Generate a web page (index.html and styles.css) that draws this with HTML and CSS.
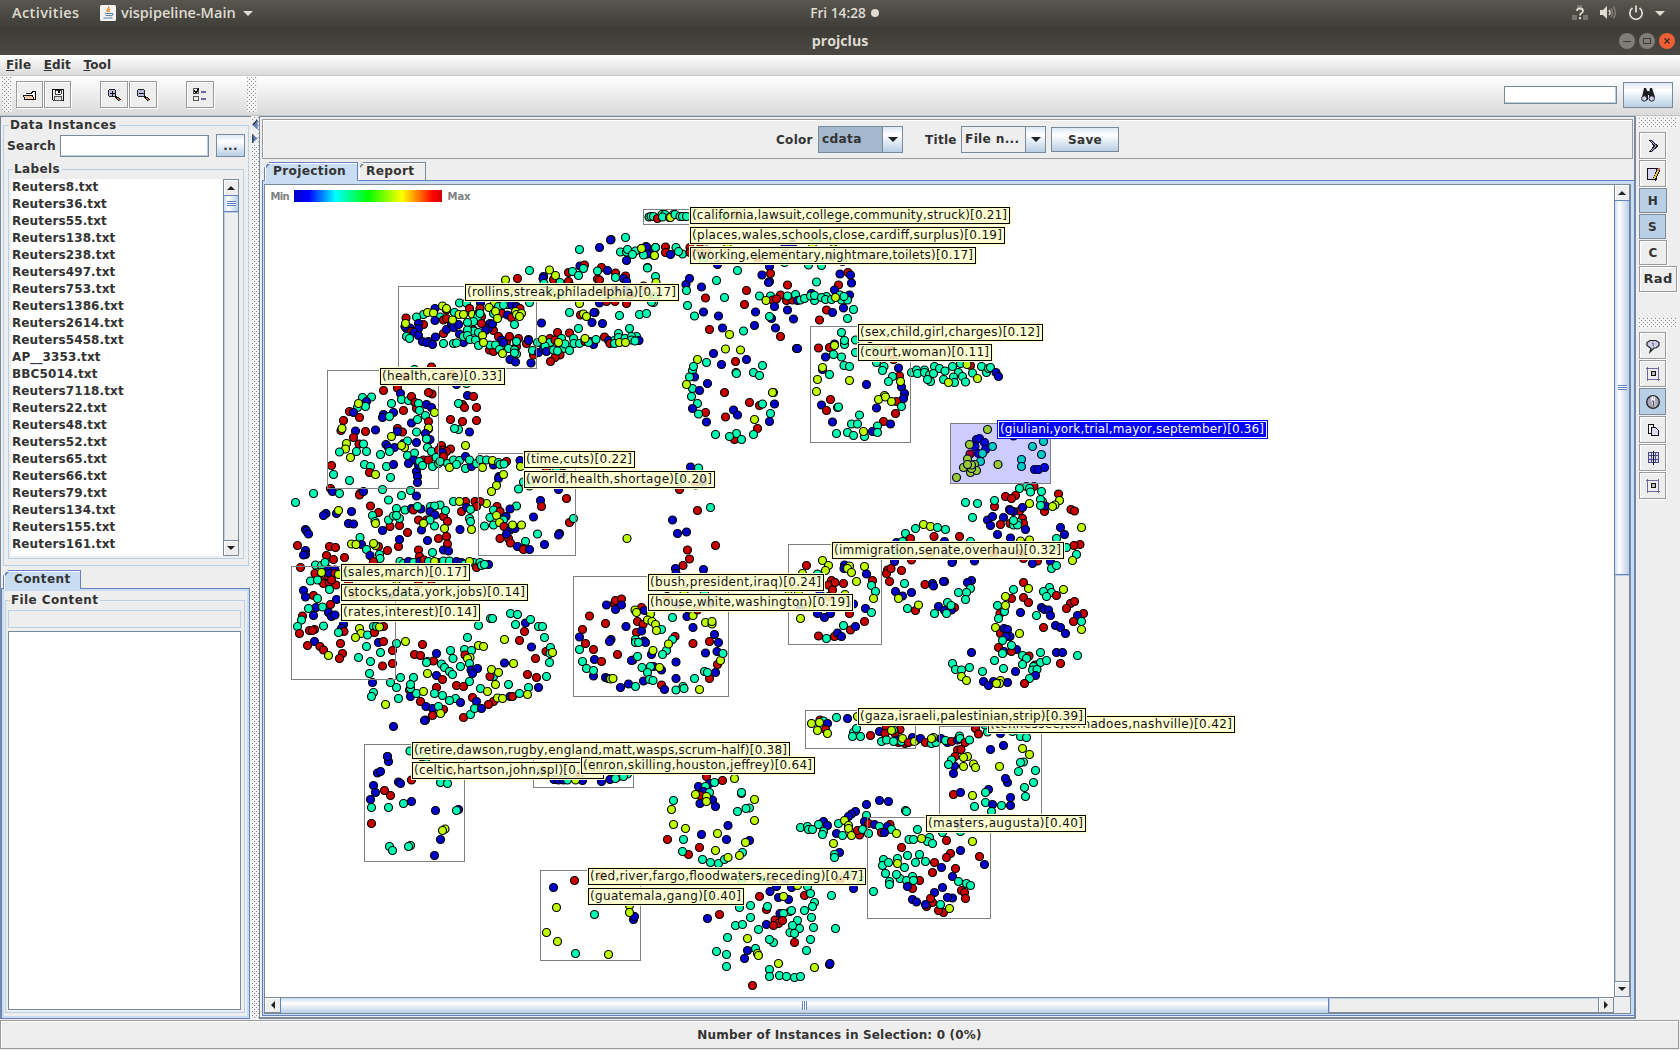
FILE: index.html
```html
<!DOCTYPE html>
<html lang="en">
<head>
<meta charset="utf-8">
<title>projclus</title>
<link rel="stylesheet" href="styles.css">
</head>
<body>
<header class="shell">
  <div class="shell-left"><span class="activities">Activities</span>
    <svg class="java" viewBox="0 0 16 16"><rect width="16" height="16" rx="1.5" fill="#f2f2f2"/><path d="M8.5 1.5c1.5 2-3 3-1 5.500M10 4c-1.500 1-1.500 2 -.5 3" stroke="#e8861e" fill="none" stroke-width="1.300"/><path d="M5 8.500h6M5.500 10.500h5M3.500 13h9M11 8.500c3-.5 2 2-.5 2.500" stroke="#54809f" fill="none" stroke-width="1.100"/></svg>
    <span class="appname">vispipeline-Main</span><i class="caret"></i></div>
  <div class="clock">Fri 14:28 <b></b></div>
  <div class="shell-right">
    <svg class="net" viewBox="0 0 16 16"><path d="M5 0h5v3H5zM0 10h5v5H0zM11 10h5v5h-5z" fill="#77756f"/><path d="M5 6q0-2.500 3-2.500 3 0 3 2.500 0 1.200-1.500 2Q8 9 8 10.500" stroke="#dfdbd2" stroke-width="1.800" fill="none"/><rect x="7" y="12" width="2" height="2.200" fill="#dfdbd2"/></svg>
    <svg class="vol" viewBox="0 0 16 16"><path d="M0 5h3l4-4v13l-4-4H0z" fill="#dfdbd2"/><path d="M9 5q2 2.500 0 5" stroke="#dfdbd2" stroke-width="1.500" fill="none"/><path d="M11 3q3 4.500 0 9M13.500 1.500q3.500 6 0 12" stroke="#8a8780" stroke-width="1.300" fill="none"/></svg>
    <svg class="pow" viewBox="0 0 16 16"><path d="M4.500 3a6.200 6.200 0 1 0 7 0M8 .5v7" stroke="#dfdbd2" stroke-width="1.800" fill="none"/></svg>
    <i class="caret"></i>
  </div>
</header>
<div class="titlebar"><span>projclus</span>
  <div class="winbtns"><svg viewBox="0 0 16 16"><circle cx="8" cy="8" r="8" fill="#7f7d76"/><path d="M4 8.500h8" stroke="#3c3b37"/></svg><svg viewBox="0 0 16 16"><circle cx="8" cy="8" r="8" fill="#7f7d76"/><rect x="4.500" y="5.500" width="7" height="5" fill="none" stroke="#3c3b37"/></svg><svg viewBox="0 0 16 16"><circle cx="8" cy="8" r="8" fill="#ee5f35"/><path d="M5.500 5.500l5 5m0-5l-5 5" stroke="#3c2a20" stroke-width="1.300"/></svg></div>
</div>
<nav class="menubar"><span><u>F</u>ile</span><span><u>E</u>dit</span><span><u>T</u>ool</span></nav>
<div class="toolbar">
  <i class="grip"></i>
  <button class="tb open"><svg class="px" viewBox="0 0 16 16"><path d="M2 6h7l3-2v8H4z" fill="#fff"/><path d="M3 9h9v3H4z" fill="#f3c9a4"/><path d="M1.500 8.500h9l1.500 4H3zM4 6.500h5l2-2h2v8" fill="none" stroke="#111"/></svg></button>
  <button class="tb save"><svg class="px" viewBox="0 0 16 16"><path d="M2.500 2.500h11v11h-10l-1-1z" fill="#eee" stroke="#111"/><path d="M5 3h6v4H5z" fill="#fff" stroke="#111" stroke-width=".8"/><rect x="8" y="3" width="2" height="3" fill="#111"/><rect x="4.500" y="9.500" width="7" height="4" fill="#ddd" stroke="#555"/></svg></button>
  <button class="tb zin"><svg class="px" viewBox="0 0 16 16"><circle cx="6" cy="6" r="4" fill="#b9b9dc" stroke="#222"/><path d="M3.500 6h5M6 3.500v5" stroke="#111"/><path d="M9 9l5 4.500" stroke="#111" stroke-width="2.600"/><path d="M11 11l3 2.500" stroke="#a5592a" stroke-width="1.200"/></svg></button>
  <button class="tb zout"><svg class="px" viewBox="0 0 16 16"><circle cx="6" cy="6" r="4" fill="#b9b9dc" stroke="#222"/><path d="M3.500 6h5" stroke="#111"/><path d="M9 9l5 4.500" stroke="#111" stroke-width="2.600"/><path d="M11 11l3 2.500" stroke="#a5592a" stroke-width="1.200"/></svg></button>
  <button class="tb list"><svg class="px" viewBox="0 0 16 16"><path d="M1.500 1.500h5v5h-5zM1.500 9.500h5v4h-5z" fill="#eee" stroke="#555"/><path d="M2.500 3.500l1.500 2 3-4" stroke="#000" fill="none" stroke-width="1.500"/><path d="M9 4.500h5M9 11.500h5" stroke="#6a6aa8" stroke-width="2"/></svg></button>
  <i class="grip second"></i>
  <div class="find"><div class="field"></div><button class="metal"><svg viewBox="0 0 16 16"><path d="M4 1h2l2 5V13H6L2 10zM10 1h2l3 9-4 3H9V6z" fill="#1c1c1c"/><path d="M7 4h2v4H7z" fill="#1c1c1c"/><circle cx="4.300" cy="11.500" r="2.700" fill="#ccccf2" stroke="#222"/><circle cx="11.700" cy="11.500" r="2.700" fill="#ccccf2" stroke="#222"/></svg></button></div>
</div>
<div class="workspace">
  <aside class="left">
    <fieldset class="instances"><legend>Data Instances</legend>
      <div class="search"><label>Search</label><div class="field"></div><button class="metal">...</button></div>
      <fieldset class="labels"><legend>Labels</legend>
        <div class="listrow"><ul id="files"></ul>
        <div class="vbar"><i class="ar up"></i><i class="thumb"><s></s></i><i class="track"></i><i class="ar down"></i></div></div>
      </fieldset>
    </fieldset>
    <div class="tab content-tab">Content</div>
    <div class="filepanel"><fieldset><legend>File Content</legend><div class="fname"></div><div class="ftext"></div></fieldset></div>
  </aside>
  <div class="divider"><svg viewBox="0 0 5 22"><path d="M5 0v9L0 4.500zM0 13v8l5-4z" fill="#6382bf"/><path d="M4.500 0L.5 4.500M.5 13v8" stroke="#222" fill="none"/></svg></div>
  <main class="main">
    <div class="options"><span>Color</span><div class="combo sel"><em>cdata</em><b></b></div><span class="ttl">Title</span><div class="combo"><em>File n...</em><b></b></div><button class="metal">Save</button></div>
    <div class="tabs"><div class="tab on">Projection</div><div class="tab off">Report</div></div>
    <div class="tabpanel"><div class="viewport">
      <svg id="plot" viewBox="265 185 1349 812">
        <defs><linearGradient id="scale"><stop offset="0" stop-color="#0000c8"/><stop offset=".1" stop-color="#00f"/><stop offset=".28" stop-color="#0ff"/><stop offset=".5" stop-color="#0f0"/><stop offset=".73" stop-color="#ff0"/><stop offset=".94" stop-color="#f00"/><stop offset="1" stop-color="#d00000"/></linearGradient></defs>
        <text class="key" x="270.500" y="200" textLength="19">Min</text><rect x="294" y="190" width="148" height="12" fill="url(#scale)"/><text class="key" x="447.500" y="200" textLength="23">Max</text>
      </svg>
      <div class="vbar big"><i class="ar up"></i><i class="thumb"><s></s></i><i class="track"></i><i class="ar down"></i></div>
      <div class="hbar"><i class="ar lf"></i><i class="thumb"><s></s></i><i class="track"></i><i class="ar rt"></i></div>
      <div class="corner"></div>
    </div></div>
  </main>
  <aside class="side">
    <i class="hgrip"></i>
    <button class="tb"><svg class="px" viewBox="0 0 16 16"><path d="M4 2h3l6 6-6 6H4l5-6z" fill="#a9a9e0"/><path d="M4.500 2.500h2l6 5.500-6 5.500h-2l5-5.500z" fill="#a9a9e0" stroke="#222"/></svg></button>
    <button class="tb"><svg class="px" viewBox="0 0 16 16"><path d="M2.500 2.500h9v11h-9z" fill="#d5d5f4" stroke="#111"/><path d="M14 3l-5 11" stroke="#111" stroke-width="3.500"/><path d="M13 5l-4 8" stroke="#e8c832" stroke-width="1.600"/><path d="M14 2l-1 3" stroke="#c77" stroke-width="2"/></svg></button>
    <button class="tb t on wide">H</button><button class="tb t on">S</button><button class="tb t wide">C</button><button class="tb t rad">Rad</button>
    <i class="hgrip next"></i>
    <button class="tb"><svg viewBox="0 0 16 16"><path d="M5 2.500h6l3 2v3l-3 2.500H9L5 14l1-3.500-4-3v-3z" fill="#cfcfe8" stroke="#222" stroke-width="1.200"/><path d="M8 3.500v1M7 5.500h1.300v3" stroke="#667" fill="none"/></svg></button>
    <button class="tb"><svg class="px" viewBox="0 0 16 16"><rect x="2.500" y="2.500" width="11" height="11" fill="none" stroke="#6a6aa0"/><path d="M1 2.500h1M14 13.500h1M2.500 1v14M13.500 1v14" stroke="#6a6aa0"/><rect x="6.500" y="5.500" width="4" height="4" fill="#bbb" stroke="#111"/></svg></button>
    <button class="tb on"><svg viewBox="0 0 16 16"><circle cx="8" cy="8" r="6.300" fill="#aaa6bd" stroke="#222" stroke-width="1.300"/><path d="M6 7h2.500v5M6 12h5M7.500 3.500h1.500v1.500H7.500z" stroke="#fff" stroke-width="2.200" fill="none"/><path d="M6.500 7h2v4.500M6 12h4.500M8 4h1" stroke="#444" fill="none"/></svg></button>
    <button class="tb"><svg class="px" viewBox="0 0 16 16"><path d="M3.500 2.500h5v9h-5z" fill="#fff" stroke="#111"/><path d="M6.500 5.500h4l3 3v5h-7z" fill="#dcdcf5" stroke="#111"/></svg></button>
    <button class="tb"><svg class="px" viewBox="0 0 16 16"><path d="M3.500 2.500h10v10h-10zM6.500 2v11M10.500 2v11M3 5.500h11M3 9.500h11" fill="#dcdcf5" stroke="#4a4a88"/><path d="M8.500 1v14" stroke="#111"/></svg></button>
    <button class="tb"><svg class="px" viewBox="0 0 16 16"><rect x="2.500" y="2.500" width="11" height="11" fill="none" stroke="#6a6aa0"/><path d="M1 2.500h1M14 13.500h1M2.500 1v14M13.500 1v14" stroke="#6a6aa0"/><rect x="6.500" y="5.500" width="4" height="4" fill="#bbb" stroke="#111"/></svg></button>
  </aside>
</div>
<footer class="status"><div>Number of Instances in Selection: 0 (0%)</div></footer>
<script src="plot.js"></script>
</body>
</html>
```
FILE: styles.css
```css
*{box-sizing:border-box}
body{margin:0;width:1680px;height:1050px;display:flex;flex-direction:column;overflow:hidden;background:#eee;color:#333;font:bold 12px/14px "DejaVu Sans",sans-serif;letter-spacing:.3px}
button,fieldset,legend,ul{margin:0;padding:0;font:inherit;color:inherit;letter-spacing:inherit}
i,em,s{font-style:normal;text-decoration:none}
.shell,.titlebar{display:grid;align-items:center;color:#dfdbd2;font:600 14.500px/18px "Open Sans","Noto Sans",sans-serif;letter-spacing:0;flex:none}
.shell{height:28px;grid-template-columns:1fr auto 1fr;padding-bottom:2px;background:linear-gradient(#59564f,#3e3d38)}
.shell-left{display:flex;align-items:center;padding-left:12px}
.activities{width:88px;letter-spacing:.4px}
.java{width:16px;height:16px;margin-right:5px}
.caret{border:5px solid transparent;border-top-color:#dfdbd2;border-bottom:0;margin-left:7px}
.clock{font-size:13.700px;display:flex;align-items:center;gap:5px;padding-left:9px}
.clock b{width:8px;height:8px;border-radius:50%;background:#dfdbd2}
.shell-right{display:flex;justify-content:flex-end;align-items:center;padding-right:15px}
.shell-right svg{width:16px;height:16px;margin-right:12px}
.shell-right .pow{margin-right:4px}
.titlebar{height:27px;padding-bottom:2px;background:linear-gradient(#3c3b37,#4b4943);text-align:center;position:relative;font-size:14.200px;font-weight:700}
.winbtns{position:absolute;right:5px;top:5px;display:flex;gap:4px}
.winbtns svg{width:16px;height:16px}
.menubar{height:21px;flex:none;display:flex;padding:3px 0 0 6px;background:linear-gradient(#fff,#dadada);border-bottom:1px solid #ccc;font-size:12px;letter-spacing:.15px}
.menubar span{margin-right:12.500px}
.toolbar{height:40px;flex:none;display:flex;align-items:center;background:linear-gradient(#fff,#dadada);border-bottom:1px solid #c4c4c4;padding:0 0 2px 2px}
.grip,.hgrip{display:block;background-image:conic-gradient(at 1px 1px,transparent 75%,#8a8f96 0),conic-gradient(at 1px 1px,transparent 75%,#8a8f96 0);background-size:4px 4px;background-position:0 0,2px 2px;background-color:#f4f4f4}
.grip{width:10px;height:35px;margin-right:4px}
.tb{width:27px;height:27px;flex:none;border:1px solid #999;background:#eee;box-shadow:inset 1px 1px #fff,1px 1px #fff;display:flex;align-items:center;justify-content:center}
.tb svg{width:16px;height:16px}
.px{shape-rendering:crispEdges}
.save{margin-left:1px}.zin{margin-left:29px;width:28px}.zout{margin-left:1px;width:28px}.list{margin-left:29px;width:28px}
.second{margin-left:33px}
.find{margin-left:auto;display:flex;align-items:center;gap:6px;padding-right:7px}
.field{background:#fff;border:1px solid #7a8a99;box-shadow:inset -1px -1px #b8cfe5}
.find .field{width:113px;height:18px}
.metal{border:1px solid #7a8a99;background:linear-gradient(#dde8f3,#fff 30%,#b8cfe5);display:block;text-align:center}
.find .metal{width:50px;height:26px}
.find svg{width:16px;height:16px;display:block;margin:auto}
.workspace{height:903px;flex:none;display:flex}
.left{width:251px;border:solid #7a8a99;border-width:1px 0 0 1px;padding:1px 2px 0;display:flex;flex-direction:column}
fieldset{border:1px solid #b8cfe5;min-width:0}
legend{margin-left:2px;padding:0 2px 0 1px;height:14px;letter-spacing:.4px}
.instances{height:448px;width:246px;padding:2px 3px 0}
.search{display:flex;height:23px;align-items:center;white-space:nowrap}
.search label{width:53px;font-size:12.200px}
.search .field{width:150px;height:22px;margin-right:6px}
.search .metal{width:29px;height:23px;margin-left:1px}
.labels{height:397px;width:236px;margin:5px 0 0 1px;padding:3px 4px 0 2px}
.listrow{display:flex;height:377px}
ul{list-style:none;flex:1;background:#fff;overflow:hidden;padding-left:1px}
li{height:17px;line-height:17px;letter-spacing:.12px}
.vbar{width:16px;display:flex;flex-direction:column;border:1px solid #7a8a99;background:#eee}
.ar{flex:none;background:#eee;box-shadow:inset 1px 1px #fff;display:flex;align-items:center;justify-content:center}
.vbar .ar{height:15px}
.ar:after{content:"";border:4px solid transparent}
.up:after{border-top:0;border-bottom-color:#222}
.down:after{border-bottom:0;border-top-color:#222}
.lf:after{border-left:0;border-right-color:#222}
.rt:after{border-right:0;border-left-color:#222}
.down{border-top:1px solid #7a8a99}
.thumb{display:flex;align-items:center;justify-content:center;border:1px solid #6382bf;margin:0 -1px;background:linear-gradient(90deg,#c8ddf2,#fff 30%,#b8cfe5);height:17px}
.thumb s{width:9px;height:5px;background:repeating-linear-gradient(#6382bf 0 1px,#fff 1px 2px)}
.vbar .track{flex:1;box-shadow:inset 1px 1px #b8cfe5}
.tab{border:1px solid #6382bf;height:19px;line-height:17px;clip-path:polygon(5px 0,100% 0,100% 100%,0 100%,0 6px);background:linear-gradient(135deg,#6382bf 4px,transparent 4.600px),#c8ddf2;box-shadow:inset 1px 1px #fff}
.content-tab{width:78px;margin:4px 0 -1px 0;padding-left:10px;border-bottom:0;position:relative;letter-spacing:.4px}
.filepanel{height:431px;width:249px;margin-left:-2px;border:1px solid #6382bf;box-shadow:inset 0 0 0 2px #c8ddf2;padding:4px 4px 3px 3px}
.filepanel fieldset{height:420px;padding:3px 3px 3px 2px}
.fname{height:18px;border:1px solid #b8cfe5}
.ftext{height:379px;margin-top:3px;background:#fff;border:1px solid #7a8a99}
.divider{width:8px;background-image:conic-gradient(at 1px 1px,transparent 75%,#8a8f96 0),conic-gradient(at 1px 1px,transparent 75%,#8a8f96 0);background-size:4px 4px;background-position:3px 1px,5px 3px;background-color:#f4f4f4}
.divider svg{display:block;width:6px;height:24px;margin:4px 0 0 1px;background:#eee}
.main{width:1377px;border:solid #7a8a99;border-width:1px 2px 2px 1px;background:#eee;padding:2px 0 0 2px}
.options{height:40px;width:1371px;border:1px solid #9c9c9c;box-shadow:inset 1px 1px #fff;display:flex;align-items:center;padding:1px 0 0 513px}
.options span{width:42px}
.options .ttl{width:36px;margin-left:22px}
.combo{width:85px;height:27px;display:flex;border:1px solid #7a8a99;line-height:25px;font-size:12.200px}
.combo em{flex:1;padding-left:3px}
.combo.sel em{background:#a3b8cc}
.combo b{width:20px;border-left:1px solid #7a8a99;background:linear-gradient(#dde8f3,#fff 30%,#b8cfe5);display:flex;align-items:center;justify-content:center}
.combo b:after{content:"";border:5px solid transparent;border-top-color:#222;border-bottom:0}
.options .metal{width:68px;height:25px;margin-left:5px}
.tabs{display:flex;height:19px;margin:3px 0 -1px 2px;font-size:12.200px}
.tab.on{width:94px;padding-left:8px;border-bottom:0}
.tab.off{width:68px;height:19px;padding-left:7px;background:linear-gradient(135deg,#7a8a99 4px,transparent 4.600px),#eee;border-color:#7a8a99 #7a8a99 #6382bf transparent}
.tabpanel{width:1373px;height:836px;border:1px solid #6382bf;background:#c8ddf2;padding:3px 3px 3px 1px}
.viewport{display:grid;grid-template:812px 16px/1349px 16px;border:1px solid #7a8a99;background:#fff}
#plot{width:1349px;height:812px;display:block}
.vbar.big{border-width:0 1px 1px}
.big .thumb{height:375px}
.hbar{display:flex;border:solid #7a8a99;border-width:1px 0}
.hbar .ar{width:16px}
.hbar .lf{width:15px}
.hbar .rt{border:solid #7a8a99;border-width:0 1px}
.hbar .thumb{width:1049px;height:15px;margin:0;border-width:0 1px;background:linear-gradient(#c8ddf2,#fff 35%,#b8cfe5)}
.hbar .thumb s{width:5px;height:9px;background:repeating-linear-gradient(90deg,#6382bf 0 1px,#fff 1px 2px)}
.hbar .track{flex:1;background:#eee;box-shadow:inset 1px 1px #b8cfe5}
.corner{background:#eee}
.key{font-size:10px;fill:#808080;letter-spacing:0}
.side{padding:2px 0 0 3px;display:flex;flex-direction:column;gap:1px}
.hgrip{width:38px;height:10px;margin-bottom:3px}
.next{margin-top:25px}
.t{height:25px}.wide{width:28px}.rad{width:38px;height:26px;font-size:13px}
.side .on{background:#b8cfe5;border-color:#7a8a99;box-shadow:none}
.status{height:31px;flex:none;padding:1px 1px 0 0}
.status div{height:29px;border:1px solid #9c9c9c;box-shadow:inset 1px 1px #fff;text-align:center;line-height:29px;letter-spacing:.18px}
.r{fill:#c80000}.b{fill:#0000c8}.g{fill:#00ffb4}.y{fill:#c0ff00}
.dot{stroke:#000;stroke-width:1.2px}
.cluster{fill:none;stroke:#808080;shape-rendering:crispEdges}
.cluster.active{fill:rgba(0,0,255,.2)}
.tag{fill:#ffffcc;fill-opacity:.85;stroke:#000;shape-rendering:crispEdges}
.halo{fill:none;stroke:#ffffcc;stroke-width:3;shape-rendering:crispEdges}
.word{font-weight:400;font-size:12px;fill:#111;letter-spacing:0}
.tag.active{fill:#00f;fill-opacity:1;stroke:#00f}
.inner{fill:none;stroke:#fff;shape-rendering:crispEdges}
.word.active{fill:#fff}
```
FILE: plot.js
```js
const files = 'Reuters8 Reuters36 Reuters55 Reuters138 Reuters238 Reuters497 Reuters753 Reuters1386 Reuters2614 Reuters5458 AP__3353 BBC5014 Reuters7118 Reuters22 Reuters48 Reuters52 Reuters65 Reuters66 Reuters79 Reuters134 Reuters155 Reuters161 Reuters170'.split(' ');
document.getElementById('files').innerHTML = files.map(f => `<li>${f}.txt</li>`).join('');

// Each group: origin x, origin y, units per pixel in x and y, then points.
// A letter switches the class colour: r, b, g (aqua) or y.
const groups = [
[640,100,3,3,`g 27 351 33 350 40 350 r 52 356 g 66 344 75 344 67 351 100 344 88 352 y 92 352 g 105 344 120 350 127 350 140 350 r 290 345 g 250 350
b 18 440 28 455 g 10 463 47 443 y 5 445 42 466 r 76 441 76 457 b 91 463 g 108 443 127 462 115 454 r 150 443 150 458 180 445 200 450 y 262 443 b 435 440 458 432 y 517 432 581 428 g 530 422 190 478 b 232 493 g 292 511 433 488 505 495 544 496 b 575 470 g 607 484 r 355 478
b 388 500 366 525 r 391 520 b 388 545 386 548 138 554 148 535 g 139 571 b 184 561 g 229 541 r 196 594 319 571 313 613 g 253 592 142 616 163 648 b 190 636 235 648 346 636 343 676 247 684 r 208 688 y 268 703 g 310 693 358 588 r 442 555 g 530 546 b 600 522 r 624 518 b 631 525 634 549 r 595 555 b 583 570
g 391 588 r 421 585 398 600 410 597 y 378 601 r 440 602 458 600 g 443 588 466 583 b 515 580 472 602 g 482 600 493 596 523 602 512 588 523 586 560 590 545 592 556 598 574 598 b 628 585 g 605 600 622 600 600 585 612 590 y 586 592
b 403 619 442 630 460 657 r 559 630 b 577 638 610 624 r 538 660 g 640 628 622 655 b 395 656 g 388 649 b 406 684 r 421 709 b 470 745 472 745
y 256 747 301 750 b 220 760 244 793 319 778 r 286 784 g 199 788 y 172 778 g 157 811 160 799 b 163 831 g 148 831 b 202 850 g 157 866 y 139 853 b 178 871 g 154 889 172 910 b 157 925 r 196 937 g 175 942 b 199 966 r 253 877 g 288 817 289 820 367 796 340 817 358 826 r 328 907 y 400 877 397 877 r 358 917 g 367 912 b 403 912 g 391 940 b 388 964 r 256 951 b 280 930 292 945 y 343 958 r 352 985 g 340 1003 226 1003 r 283 1019 g 290 1000 268 1010 304 1018
g 604 697 613 733 613 721 646 720 r 535 744 568 742 b 583 732 y 583 736 b 556 771 g 580 763 604 771 646 757 612 796 628 799 b 547 808 y 547 802 g 568 823 y 532 838 628 841 530 874 b 679 853 g 690 740 715 750 r 745 742 761 778 g 709 788 732 800 727 811 b 775 804 r 779 828 g 757 829 745 844 b 784 861 y 781 844 b 794 880 790 895 r 769 904 y 733 886 715 898 736 891 754 904 g 784 919 b 709 924 r 767 940 571 898 b 544 915 r 559 931 g 593 922 595 921 b 577 966 g 658 945 634 972 652 972 r 730 964 b 751 972 g 712 978 589 1000 622 997 640 1006 b 697 994 g 712 997 673 1010 y 670 994
g 815 817 830 810 833 820 854 810 853 817 883 799 868 825 881 820 898 805 915 813 872 844 863 838 938 799 962 790 r 992 797 y 981 793 g 955 817 940 831 967 829 911 838 944 847 y 925 847 g 976 846 998 819 1024 800 y 1012 835 g 1040 817 1045 805 1052 803 b 1068 818 1076 829`],
[260,180,3,3,`g 958 208 b 1018 202 1053 178 1051 180 g 1096 172 b 1160 201 1162 222 g 1081 216 1099 216 1102 208 1126 213 1150 225 1117 223 y 1144 205 g 1186 202 y 1183 226 b 1099 241
y 736 300 r 772 295 g 808 271 b 850 289 849 296 r 880 298 925 277 y 868 270 886 286 g 852 310 900 308 r 925 305 g 937 274 b 960 258 r 973 255 g 970 265 955 286 r 1024 262 g 1012 273 b 1042 271 r 1066 279 g 1066 292 r 1012 297 1018 300 1096 288 b 1090 295 1100 305 g 1162 262 1162 264 1186 289 y 1188 308 745 330 g 870 335 y 880 350 935 320 g 905 345 b 1065 330 r 1035 335 y 1090 350 1062 355 r 1150 318 g 1185 350 r 1110 345 b 1100 330 y 1160 350 958 370 g 808 368 928 397 r 961 405 y 970 402 979 409 b 1005 397 1018 369 r 1040 364 1065 364 1099 371 g 1078 406 1138 403 1159 400 1180 368 1174 366 b 844 429 1002 398 996 427 1027 430 g 955 445 1108 445 1075 460
g 598 369 620 369 b 661 369 g 742 373 y 703 368 b 525 385 r 560 390 y 547 378 559 385 g 583 398 490 403 540 411 y 502 397 520 399 g 469 411 r 438 414 b 525 422 r 550 420 490 433 b 475 430 475 445 440 446 450 444 r 455 455 b 462 458 435 440 y 436 430 g 440 470 448 475 b 475 466 487 485 505 485 500 487 517 493 526 471 r 550 461 b 559 448 575 433 580 443 595 433 r 560 415 y 577 420 597 403 r 629 385 y 610 403 637 403 b 655 400 r 660 385 665 410 g 652 412 660 400 640 425 622 427 r 640 450 700 452 g 640 453 622 450 b 598 462 610 487 g 610 470 550 490 580 490 590 489 622 466 630 478 b 690 430 685 445 r 665 430 b 697 432 676 452 g 655 458 y 667 466 g 647 480 655 497 r 688 510 715 470 b 725 480 r 740 485 700 515 g 690 495 706 495 y 670 487 g 718 508 b 730 487 g 745 505 y 727 520 r 748 470 775 475 770 500 g 769 484 763 510 769 522 763 519 b 750 538 767 546 813 549 720 390 755 375 770 380 y 687 383 g 715 380 700 400 r 725 400 g 730 375 b 743 405 y 706 394 712 415 r 755 412 780 385 y 766 394 770 403 784 400 778 410 g 763 433
r 805 478 800 490 b 806 482 r 820 525 g 817 511 832 488 b 835 518 850 505 r 870 475 g 870 488 855 498 y 847 478 r 892 457 928 459 885 480 b 860 515 g 905 475 880 510 893 513 910 505 915 492 928 511 940 475 942 490 y 895 487 r 900 525 885 533 g 880 510 893 513 r 871 544 g 959 490 r 975 485 b 990 485 1000 493 g 985 487 1008 478 y 975 476 r 1033 471 b 1045 481 g 1063 482 1075 473 r 1050 490 g 1095 475 1130 470 1115 470 b 1137 481 g 1115 480 1125 483 1063 490 y 1078 487 1096 487
r 514 561 g 463 569 r 436 590 b 589 613 g 619 610 r 575 582`],
[280,360,3,3,`r 311 91 352 84 b 361 100 r 456 102 446 97 g 247 113 274 111 b 260 124 g 256 140 232 142 y 235 130 g 334 130 364 118 385 121 r 395 110 405 128 b 440 133 455 142 r 410 145 g 415 130 r 371 151 b 340 157 310 164 308 172 g 328 169 r 208 154 b 220 158 r 238 172 190 181 183 211 y 186 206 g 418 152 436 166 y 463 157 b 394 189 g 412 178 r 445 185 b 445 207 y 445 204 b 226 213 r 256 214 b 286 210 r 352 206 368 216 b 352 215 y 334 229 g 409 216 b 436 220 450 238 g 439 237 r 220 232 y 199 250 r 237 252 g 250 252 y 196 267 g 178 276 y 211 292 g 230 274 259 274 301 283 b 318 254 325 262 343 262 g 328 274 b 370 250 g 382 243 y 373 263 364 257 b 409 247 g 442 263 382 286 403 279 455 275 253 313 271 320 319 319 b 340 313 r 269 338 y 286 343 g 331 352 r 154 316 g 160 343 208 361 b 410 335 412 350 412 367
r 485 257 475 270 490 270 512 267 500 275 b 487 277 g 468 292 r 430 300 b 400 300 385 310 415 315 g 418 305 427 316 r 445 300 g 457 320 475 310 r 490 290 g 480 305 502 310 520 300 538 301 y 508 322 b 557 290 g 530 313 557 325 b 575 320 g 568 300 590 310 600 298 620 300 y 607 322 b 640 315 y 637 301 r 680 305 g 655 307 660 313 672 312
b 562 106 r 581 109 547 133 g 536 130 r 553 142 589 142 511 178 547 184 589 182 g 535 208 523 205 b 568 216 y 556 256
b 657 350 655 355 y 670 343 649 376 634 394 g 715 387 b 720 302 y 722 319 g 730 366 748 378 b 835 389 r 859 415 b 781 421 r 784 439 g 709 438 b 690 447 y 619 430 r 651 440 g 640 450 r 660 455 b 678 470 g 670 480 630 472 613 498 640 495 y 649 466 658 487 r 672 500 b 690 510 705 505 y 697 495 724 495 r 660 535 685 535 b 679 522 r 691 549 g 736 544 b 712 559 730 565 r 730 569 b 748 568 g 772 522 b 760 471 838 521 836 525 793 553 r 868 487 g 880 475 r 800 330 b 850 340 g 830 330
g 46 427 100 400 r 151 385 b 157 394 g 178 400 r 240 400 239 405 b 250 394 g 307 388 325 420 364 406 391 391 b 409 408 138 460 130 467 169 460 y 175 451 b 214 454 205 490 220 492 76 508 79 513 86 522 r 271 438 295 458 g 277 466 285 485 y 286 490 b 307 512 g 349 445 r 330 500 358 496 382 517 g 325 480 340 468 358 475 375 450 349 467 b 395 445 r 400 450 b 423 447 g 412 440 460 440 452 440 480 435 463 438 r 415 480 b 450 455 465 465 r 440 480 b 425 510 g 463 498 450 480 y 430 490 r 490 470 g 497 451 r 503 485 y 493 505 g 520 424 r 557 425 y 538 424 r 545 455 b 560 442 r 585 425 600 425 590 440 g 571 448 568 475 571 485 b 540 509 y 574 508 r 499 530 475 535 502 552 b 443 541 g 457 577 b 490 570 505 573 r 355 559 b 358 538 r 415 570 418 590 322 571 g 240 532 b 245 553 y 214 552 228 553 g 259 569 r 295 560 y 286 556 280 550 b 270 586 g 298 583 300 595 r 52 556 b 76 571 76 583 70 585 r 148 559 166 562 139 586 160 598 193 592 61 622
r 280 605 g 360 605 370 610 b 385 605 g 400 608 b 420 605 r 432 600 g 445 605 b 475 608 y 463 604 g 490 603 508 603 b 530 605 545 607 g 555 612 580 608 y 568 604 r 590 622 g 600 608 b 625 613 g 605 616 613 613
r 105 640 b 145 628 165 630 r 120 660 145 650 b 148 640 r 165 640 g 106 615 125 617 135 608 y 124 637 r 130 670 148 668 168 675 155 660 g 91 663 112 660 148 688 y 175 643 b 70 691 76 711 r 100 706 g 112 715 b 169 718 r 151 733 b 108 743 g 86 745 127 741 b 100 766 145 757 154 770 165 765 r 67 768 g 64 780 52 799 r 58 820 103 808 88 812 97 812 g 130 798 b 190 793 185 805 r 192 815 g 175 817 b 103 844 r 82 856 120 860 130 870 y 145 886 r 181 850 187 880 178 895 y 238 805 243 820 226 832 g 280 800 262 825 r 283 818 310 800 g 290 800 y 298 801 g 259 859 b 295 847 r 310 844 g 235 892 271 904 301 877 r 337 871 337 910 307 918 g 268 940 b 277 967 g 280 997 274 1009 y 316 1033 g 349 850 y 376 844 b 340 1099 g 200 640 r 205 670 455 660 y 320 650 350 660 r 415 672 b 330 710 r 220 705 g 375 705
r 427 853 403 883 421 886 b 469 880 g 442 905 r 460 903 g 440 908 511 871 519 895 484 912 493 922 508 935 517 943 541 919 553 868 574 872 r 555 885 y 570 893 562 895 g 568 910 b 573 930 592 925 578 940 g 568 964 y 442 940 b 470 947 r 487 958 g 400 952 361 953 331 967 349 983 355 1015 r 388 990 g 392 985 391 973 b 391 1009 g 409 1000 y 430 994 r 469 982 g 463 1000 487 1006 r 421 1024 530 976 550 979 g 601 985 r 577 1012 g 640 950 y 622 994 646 973 r 630 950 y 634 928 655 937 b 673 909 y 700 910 g 685 973 526 1015 508 1021 b 541 1027 438 1040 457 1046 r 490 1048 457 1066 g 475 1040 y 481 1060 b 436 1080 434 1081 r 550 1072 g 571 1064 b 589 1024 g 583 1045 b 604 1046 r 640 1025 625 1033 b 690 1010 r 697 1009 y 652 1014 667 1015 g 718 1000 b 775 983 g 745 983 y 742 1003 r 742 943 769 952 g 799 949 808 908 r 766 895 798 875 g 812 862 810 880 y 817 877 b 754 861 r 718 841 y 673 838 r 733 814 b 736 789 g 706 793 751 778 775 800 787 799 793 832 691 760 712 763 595 796 632 775 637 775 562 832 y 595 856 610 859`],
[560,450,2.8,3,`b 365 51 g 388 54 r 335 119 g 335 88 r 380 105 b 400 95 r 385 181 g 421 172 b 315 210 y 188 265 b 329 250 354 246 r 435 286 357 300 363 327 345 346 b 323 355 402 359 325 370
r 152 460 170 457 155 452 172 447 b 130 465 155 479 172 465 r 83 498 127 520 63 538 b 55 561 r 71 580 94 598 g 55 598 b 97 628 r 116 634 g 63 634 74 655 b 94 678 g 94 661 b 185 529 143 568 139 574 r 161 613 b 127 683 135 685 y 142 687 148 685 b 169 712 192 702 g 211 709 r 228 472 b 236 482 y 210 480 214 488 r 217 515 232 523 y 253 492 245 510 258 515 268 524 g 284 538 y 270 541 r 214 548 b 228 543 g 211 568 211 577 b 235 573 240 578 g 220 577 b 256 613 y 261 601 r 322 559 g 315 568 298 602 287 613 y 304 582 b 205 630 200 632 g 217 620 b 262 650 284 660 g 230 652 253 650 y 279 652 b 234 693 g 245 667 250 688 261 692 r 284 705 b 293 718 325 636 325 685 g 325 720 345 710 347 716 y 391 718 g 377 686 r 419 686 b 435 667 g 405 664 413 668 r 441 643 y 449 631 b 440 605 g 456 610 b 407 609 444 577 r 419 574 b 433 554 r 373 580 b 373 532 y 408 518 425 522 425 514 g 315 502 b 356 500 y 373 496 r 300 440 385 480 b 420 460 y 347 425 g 405 428 b 330 465`],
[780,410,3,3,`y 622 58 b 590 88 598 85 614 97 585 110 y 568 103 b 616 118 g 637 109 r 570 132 b 595 130 g 607 130 601 155 y 562 147 550 172 584 163 572 188 590 182 575 175 575 165 562 163 654 163 529 202 g 757 109 784 133 790 95 724 148 724 169 b 700 78 763 178 775 178 793 172
r 79 466 y 127 452 145 466 136 482 b 194 465 192 475 y 208 468 202 476 214 488 253 469 b 259 492 y 229 515 r 277 511 g 274 526 287 544 y 280 565 r 190 520 155 512 145 525 165 518 157 540 b 120 550 r 145 560 y 195 553 g 112 492 y 67 490 b 257 596 g 274 607 y 61 625 b 112 611 133 622 151 611 r 208 611 211 660 b 226 649 r 253 634 g 190 646 r 115 678 g 139 685 r 163 680 b 172 669 184 680 220 582 y 90 590 b 62 592 y 55 545 25 540
g 376 370 406 355 y 430 343 451 349 g 472 352 497 358 r 391 385 b 350 397 g 367 395 r 462 380 b 493 395 r 538 379 g 571 394 r 394 450 b 343 455 r 322 480 320 490 333 475 364 481 328 514 b 346 544 g 373 520 b 368 558 394 547 y 355 565 r 435 523 b 457 520 460 528 493 514 490 515 g 382 595 r 406 601 y 415 585 b 518 455 516 457 583 453 574 511 562 517 g 571 535 535 548 559 548 556 568 b 475 589 r 524 592 b 493 601 515 600 g 502 577 513 586 463 610 500 610 350 430 r 450 430 b 500 430 r 640 430 720 430 g 820 410
g 740 230 r 762 230 g 718 235 748 235 751 246 784 244 r 835 252 y 838 271 g 556 277 592 280 r 643 290 g 643 271 577 322 r 676 259 706 256 694 265 y 748 280 g 787 275 781 268 r 793 305 b 796 288 g 781 286 y 825 285 817 289 r 873 298 883 303 718 303 b 700 305 688 298 692 302 727 292 622 330 637 319 631 346 670 322 r 661 343 727 325 730 340 690 340 g 700 345 714 338 712 345 700 332 b 736 358 652 373 692 384 y 721 393 748 390 b 841 352 853 373 g 829 385 y 904 352 r 900 403 882 406 g 859 412 889 434 y 877 451 r 773 453 b 757 461 r 730 445 b 812 455 g 814 476 829 466
r 730 517 y 745 535 g 700 538 808 532 791 544 815 547 r 829 556 g 799 559 y 850 538 r 694 565 y 676 559 g 652 586 r 730 562 745 577 b 721 607 r 660 610 g 673 604 655 625 y 676 586 g 769 616 b 784 592 793 598 805 600 812 616 r 871 580 883 574 859 595 910 610 b 892 616 r 880 634 g 904 634 y 904 658 r 790 652 b 826 647 841 652 856 670 y 646 652 r 662 670 b 672 655 682 658 690 680 678 680 y 718 670 g 667 691 r 655 712 b 672 725 709 718 r 694 724 g 694 706 667 730 b 574 728 g 643 751 517 760 526 778 545 780 568 772 607 784 671 775 b 706 784 g 727 736 r 747 738 g 739 745 727 763 781 727 b 829 727 847 727 g 892 736 r 841 760 765 765 g 781 757 799 751 760 770 757 780 771 778 b 767 797 g 748 805 r 733 821 y 544 799 559 811 b 610 814 640 814 625 826 682 817 y 661 811 658 820 649 820`],
[350,700,3,3,`g 180 153 b 112 169 115 184 112 169 82 219 91 214 70 256 76 277 61 298 r 103 271 121 286 b 146 246 151 250 r 184 240 g 64 322 115 322 160 310 b 184 304 g 271 248 292 250 r 64 370 b 256 331 325 328 g 319 331 y 285 387 277 391 b 271 418 g 118 439 127 451 182 436 176 439 b 253 466 g 215 170 230 172 r 300 212
y 585 222 b 575 212 612 238 625 240 640 240 g 652 240 b 697 242 y 677 240 b 754 244 r 690 222 b 780 238 g 785 215 805 230 797 236 832 222 820 230
r 1069 230 b 1045 259 1078 250 r 1117 241 y 1153 235 g 1093 247 1066 259 b 1060 275 g 1078 277 r 1050 287 y 1036 283 b 1088 300 y 1069 290 b 1050 310 y 1069 304 b 1096 319 g 970 301 y 964 328 970 373 1006 385 g 1175 280 1174 277 y 1213 298 g 1162 334 1198 324 1188 325 y 1213 361 b 1134 376 1054 403 y 1102 400 b 1129 418 1198 421 y 1186 427 r 952 418 g 1000 418 r 1048 442 1015 463 g 997 454 y 1096 451 g 1057 478 1081 488 1105 490 1123 478 y 1134 472 g 1177 457 y 1168 466
r 673 541 b 610 562 y 619 622 g 733 643 y 838 616 b 850 658 853 650 y 838 637 589 697 622 724 g 676 760 y 775 763 r 755 528
b 1260 574 1280 560 r 1228 589 b 1285 592 1315 598 y 1300 590 b 1325 562 y 1343 557 g 1373 560 r 1363 586 g 1381 580 1444 586 1393 607 1387 620 1363 631 r 1108 643 b 1072 655 g 1168 622 1201 616 r 1249 628 g 1252 619 1201 652 b 1290 640 g 1320 635 1300 640 1324 631 r 1275 660 1285 670 1297 661 b 1249 673 r 1270 676 g 1156 676 1177 673 1225 688 1342 661 1320 697 1348 685 1327 676 1333 700 1384 652 1390 682 1381 718 1369 751 r 1333 727 g 1456 685 1132 712 y 1192 715 g 1270 727 1258 718 1099 754 1129 763 1129 799 b 1192 751 g 1216 745 b 1183 775 y 1222 760 1225 766 1285 790 g 1258 808 1258 829 1288 826 1309 829 1333 832 1351 829 y 1393 802 b 1438 793 1440 790 r 1207 856 g 1175 540 1240 540 1215 516 r 1265 545 b 1305 545 r 1470 540 g 1075 590`],
[760,690,3,3,`r 180 90 g 190 93 b 203 100 y 154 100 179 97 r 197 118 y 172 121 202 130 g 229 82 b 262 85 y 293 79 g 280 127 289 115 277 139 301 139 r 331 136 b 358 124 r 380 112 420 118 405 130 375 130 g 400 120 y 394 121 r 415 158 435 160 b 410 150 g 364 154 379 150 400 154 425 155 y 427 145 b 457 142 r 445 158 b 470 150 y 463 155 b 481 145 r 497 158 g 515 160 528 158 y 520 142 515 146 b 543 145 563 157 g 556 151 r 575 155 b 592 150 g 598 138 600 145 r 615 158 g 628 150
r 646 115 656 132 g 683 126 675 105 b 721 130 g 757 125 781 140 799 142 r 592 180 603 179 b 730 167 691 178 y 787 175 808 193 r 585 200 b 583 228 g 575 210 565 223 b 580 250 y 622 200 610 202 610 230 640 222 646 232 718 229 g 790 216 781 217 775 244 826 241 b 742 277 736 265 g 820 277 793 292 796 319 r 580 313 b 601 307 y 637 316 b 685 298 g 676 307 643 349 676 337 b 697 343 g 724 346 b 751 322 752 346 g 694 364
b 319 343 359 331 385 334 g 436 361 439 364 b 286 364 274 372 265 379 g 319 376 121 412 143 410 b 190 394 g 145 418 157 419 b 202 406 g 175 403 190 425 187 433 235 400 y 253 391 265 407 b 229 430 g 247 436 y 265 415 274 436 r 298 435 293 422 b 313 394 r 325 400 g 307 418 325 430 b 343 403 r 390 403 g 358 409 r 365 428 b 382 409 g 394 418 b 373 428 y 409 430 220 460 b 238 487 g 224 493 223 502
g 472 418 447 449 460 448 508 442 503 455 517 460 y 484 445 r 424 472 g 547 428 601 425 r 559 451 y 637 454 b 601 481 r 571 490 559 502 658 499 b 673 523 g 442 496 478 493 466 517 497 514 r 523 517 b 544 532 r 517 547 586 535 g 370 508 367 526 385 517 412 505 y 412 520 g 433 532 376 550 420 565 410 553 389 574 388 583 457 560 439 571 r 478 571 g 460 571 r 457 596 b 442 590 g 340 604 b 577 559 g 595 574 619 580 631 586 b 547 592 523 607 577 624 562 622 r 605 602 613 607 616 626 b 457 628 469 636 r 517 637 511 625 500 650 b 496 643 r 550 668 535 661 g 541 643 y 568 655 g 268 545 b 280 595 g 305 572 b 595 405`]];

let out = '';
for (const [ox, oy, sx, sy, data] of groups) {
  const t = data.split(/\s+/);
  let c = 'b';
  for (let i = 0; i < t.length;) {
    if (/[a-z]/.test(t[i])) { c = t[i++]; continue; }
    const x = Math.round((ox + t[i++] / sx) * 2) / 2, y = Math.round((oy + t[i++] / sy) * 2) / 2;
    out += `<circle class="dot ${c}" cx="${x}" cy="${y}" r="4"/>`;
  }
}

// left, top, right, bottom
const clusters = [[643,209,742,224],[398,286,536,368],[327,370,438,488],[478,453,575,555],[291,566,395,679],[573,576,728,696],[788,544,881,644],[810,326,910,442],[805,710,915,748],[939,726,1041,816],[867,817,990,918],[364,744,464,861],[533,759,633,787],[540,870,640,960],[950,423,1050,483,1]];
for (const [l, t, r, b, on] of clusters)
  out += `<rect class="cluster${on ? ' active' : ''}" x="${l + .5}" y="${t + .5}" width="${r - l}" height="${b - t}"/>`;

// left, top, right, terms
const tags = [[690,207,1009,'(california,lawsuit,college,community,struck)[0.21]'],[690,227,1004,'(places,wales,schools,close,cardiff,surplus)[0.19]'],[690,247,975,'(working,elementary,nightmare,toilets)[0.17]'],[465,284,678,'(rollins,streak,philadelphia)[0.17]'],[380,368,504,'(health,care)[0.33]'],[858,324,1042,'(sex,child,girl,charges)[0.12]'],[858,344,991,'(court,woman)[0.11]'],[524,451,634,'(time,cuts)[0.22]'],[524,471,714,'(world,health,shortage)[0.20]'],[341,564,469,'(sales,march)[0.17]'],[341,584,527,'(stocks,data,york,jobs)[0.14]'],[341,604,479,'(rates,interest)[0.14]'],[648,574,823,'(bush,president,iraq)[0.24]'],[648,594,852,'(house,white,washington)[0.19]'],[832,542,1063,'(immigration,senate,overhaul)[0.32]'],[988,716,1234,'(tennessee,tornadoes,nashville)[0.42]'],[858,708,1085,'(gaza,israeli,palestinian,strip)[0.39]'],[926,815,1085,'(masters,augusta)[0.40]'],[412,742,789,'(retire,dawson,rugby,england,matt,wasps,scrum-half)[0.38]'],[412,762,603,'(celtic,hartson,john,spl)[0.39]'],[581,757,814,'(enron,skilling,houston,jeffrey)[0.64]'],[588,868,865,'(red,river,fargo,floodwaters,receding)[0.47]'],[588,888,743,'(guatemala,gang)[0.40]']];
for (const [l, t, r, s] of tags)
  out += `<rect class="halo" x="${l + .5}" y="${t + .5}" width="${r - l}" height="16"/><rect class="tag" x="${l + .5}" y="${t + .5}" width="${r - l}" height="16"/><text class="word" x="${l + 2}" y="${t + 12}" textLength="${r - l - 4}">${s}</text>`;
out += '<rect class="tag active" x="997.5" y="420.5" width="270" height="18"/><rect class="inner" x="998.5" y="421.5" width="268" height="16"/><text class="word active" x="1000" y="433" textLength="264">(giuliani,york,trial,mayor,september)[0.36]</text>';
document.getElementById('plot').insertAdjacentHTML('beforeend', out);
```
